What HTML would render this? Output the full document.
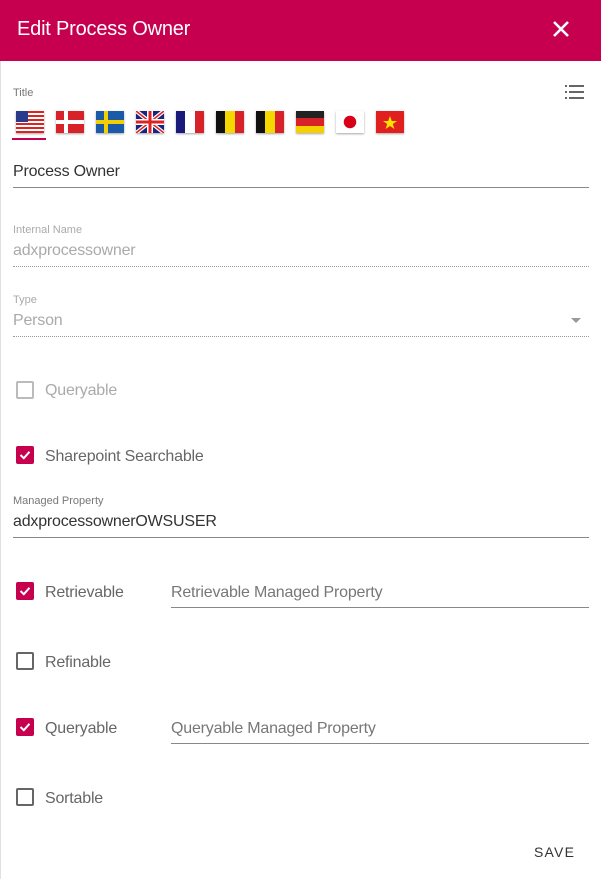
<!DOCTYPE html>
<html><head><style>
body{margin:0;width:601px;height:879px;background:#fff;font-family:"Liberation Sans",sans-serif;position:relative;overflow:hidden}
.bl{position:absolute;left:0;top:0;width:1px;height:879px;background:#e0e0e0}
.hdr{position:absolute;left:0;top:0;width:601px;height:61px;background:#c6004f}
.hdr span{position:absolute;left:17px;top:18px;color:#fff;font-size:20px;letter-spacing:-0.2px}
.a{position:absolute}
.lbl{font-size:11px;color:#777}
.val{font-size:16px;color:#333;letter-spacing:-0.2px}
.dis{color:#aaa}
.line{position:absolute;height:0;border-top:1px solid #888}
.dot{position:absolute;height:0;border-top:1px dotted #999}
.cb{position:absolute;width:14px;height:14px;border:2px solid #666;border-radius:2px}
.cb.d{border-color:#bbb}
.cb.on{background:#c6004f;border-color:#c6004f}
.txt{position:absolute;font-size:16px;color:#666;letter-spacing:-0.2px}
.flag{position:absolute;top:111px;width:28px;height:22px;box-shadow:0 1px 2px rgba(0,0,0,.35)}
</style></head><body>
<div class="bl"></div>
<div class="hdr"><span>Edit Process Owner</span>
<svg class="a" style="left:552px;top:20px" width="18" height="18"><path d="M2 2L16 16M16 2L2 16" stroke="#fff" stroke-width="2.6"/></svg></div>
<div class="a lbl" style="left:13px;top:87px">Title</div>
<svg class="a" style="left:565px;top:84px" width="20" height="16"><g fill="#666"><rect x="0" y="1" width="2" height="2"/><rect x="0" y="7" width="2" height="2"/><rect x="0" y="13" width="2" height="2"/><rect x="4" y="1" width="15" height="2"/><rect x="4" y="7" width="15" height="2"/><rect x="4" y="13" width="15" height="2"/></g></svg>
<div class="flag" style="left:16px;background:repeating-linear-gradient(#d22 0 2px,#fff 2px 4px)"><div style="width:12px;height:11px;background:#2a3a8a"></div></div>
<div class="flag" style="left:56px;background:linear-gradient(90deg,transparent 8px,#fff 8px 12px,transparent 12px),linear-gradient(transparent 9px,#fff 9px 13px,transparent 13px),#d8222a"></div>
<div class="flag" style="left:96px;background:linear-gradient(90deg,transparent 8px,#f5d000 8px 12px,transparent 12px),linear-gradient(transparent 9px,#f5d000 9px 13px,transparent 13px),#1a5aa8"></div>
<svg class="flag" style="left:136px" viewBox="0 0 28 22"><rect width="28" height="22" fill="#1a237e"/><path d="M0 0L28 22M28 0L0 22" stroke="#fff" stroke-width="4"/><path d="M0 0L28 22M28 0L0 22" stroke="#d22" stroke-width="1.5"/><path d="M14 0V22M0 11H28" stroke="#fff" stroke-width="6"/><path d="M14 0V22M0 11H28" stroke="#d22" stroke-width="3"/></svg>
<div class="flag" style="left:176px;background:linear-gradient(90deg,#1a1a7a 0 9px,#fff 9px 19px,#d8222a 19px)"></div>
<div class="flag" style="left:216px;background:linear-gradient(90deg,#111 0 9px,#f5d800 9px 19px,#d8222a 19px)"></div>
<div class="flag" style="left:256px;background:linear-gradient(90deg,#111 0 9px,#f5d800 9px 19px,#d8222a 19px)"></div>
<div class="flag" style="left:296px;background:linear-gradient(#222 0 7px,#d8222a 7px 15px,#f5d000 15px)"></div>
<div class="flag" style="left:336px;background:radial-gradient(circle at 50% 50%,#d80018 0 6px,#fff 6.5px)"></div>
<div class="flag" style="left:376px;background:#e0201e"><svg width="28" height="22"><polygon points="14,5 15.8,10 21,10 16.8,13 18.4,18 14,15 9.6,18 11.2,13 7,10 12.2,10" fill="#ffe000"/></svg></div>
<div class="a" style="left:12px;top:138px;width:34px;height:2px;background:#c6004f"></div>
<div class="a val" style="left:13px;top:163px">Process Owner</div>
<div class="line" style="left:13px;top:187px;width:576px"></div>
<div class="a lbl" style="left:13px;top:224px;color:#aaa">Internal Name</div>
<div class="a val dis" style="left:13px;top:242px">adxprocessowner</div>
<div class="dot" style="left:13px;top:266px;width:576px"></div>
<div class="a lbl" style="left:13px;top:294px;color:#aaa">Type</div>
<div class="a val dis" style="left:13px;top:312px">Person</div>
<svg class="a" style="left:571px;top:318px" width="10" height="5"><path d="M0 0H10L5 5Z" fill="#999"/></svg>
<div class="dot" style="left:13px;top:336px;width:576px"></div>
<div class="cb d" style="left:16px;top:381px"></div><div class="txt" style="left:45px;top:382px;color:#aaa">Queryable</div>
<div class="cb on" style="left:16px;top:446px"><svg width="14" height="14"><path d="M2.5 7L5.8 10.2L11.5 3.8" stroke="#fff" stroke-width="2" fill="none"/></svg></div><div class="txt" style="left:45px;top:448px">Sharepoint Searchable</div>
<div class="a lbl" style="left:13px;top:495px">Managed Property</div>
<div class="a val" style="left:13px;top:513px">adxprocessownerOWSUSER</div>
<div class="line" style="left:13px;top:537px;width:576px"></div>
<div class="cb on" style="left:16px;top:582px"><svg width="14" height="14"><path d="M2.5 7L5.8 10.2L11.5 3.8" stroke="#fff" stroke-width="2" fill="none"/></svg></div><div class="txt" style="left:45px;top:584px">Retrievable</div>
<div class="txt" style="left:171px;top:584px;color:#777">Retrievable Managed Property</div>
<div class="line" style="left:171px;top:607px;width:418px"></div>
<div class="cb" style="left:16px;top:652px"></div><div class="txt" style="left:45px;top:654px">Refinable</div>
<div class="cb on" style="left:16px;top:718px"><svg width="14" height="14"><path d="M2.5 7L5.8 10.2L11.5 3.8" stroke="#fff" stroke-width="2" fill="none"/></svg></div><div class="txt" style="left:45px;top:720px">Queryable</div>
<div class="txt" style="left:171px;top:720px;color:#777">Queryable Managed Property</div>
<div class="line" style="left:171px;top:743px;width:418px"></div>
<div class="cb" style="left:16px;top:788px"></div><div class="txt" style="left:45px;top:790px">Sortable</div>
<div class="a" style="left:534px;top:844px;font-size:14px;letter-spacing:1.2px;color:#333">SAVE</div>
</body></html>
